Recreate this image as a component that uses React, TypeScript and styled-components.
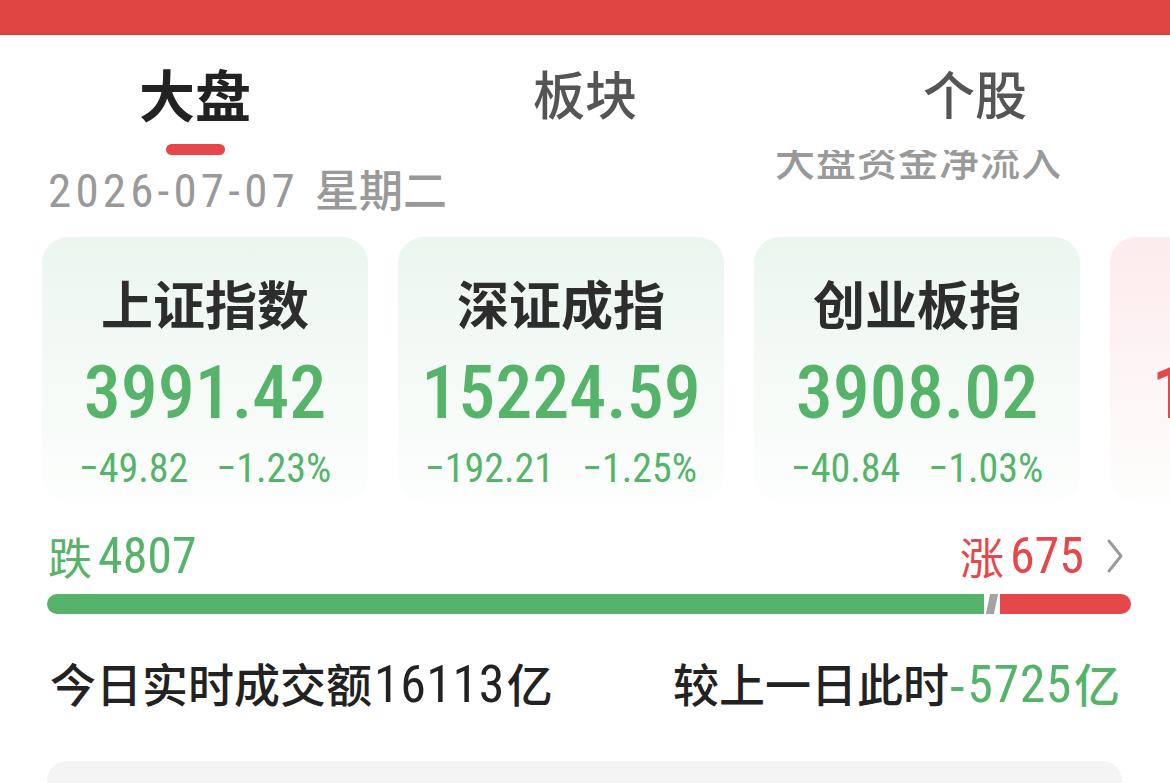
import React from "react";
import styled, { createGlobalStyle } from "styled-components";

const GlobalStyle = createGlobalStyle`
  html, body {
    margin: 0;
    padding: 0;
    background: #ffffff;
    font-family: "Noto Sans CJK SC", "Noto Sans", sans-serif;
  }
  * { box-sizing: border-box; }
`;

const NUM_FONT = `"Liberation Sans Narrow", "Roboto Condensed", "DejaVu Sans Condensed", Roboto, "Noto Sans CJK SC", sans-serif`;

const GREEN = "#55b46a";
const RED = "#e5474b";

interface IndexData {
  name: string;
  price: string;
  change: string;
  percent: string;
  up?: boolean;
}

const indices: IndexData[] = [
  { name: "上证指数", price: "3991.42", change: "−49.82", percent: "−1.23%" },
  { name: "深证成指", price: "15224.59", change: "−192.21", percent: "−1.25%" },
  { name: "创业板指", price: "3908.02", change: "−40.84", percent: "−1.03%" },
  { name: "北证50", price: "1388.56", change: "+5.1", percent: "+0.4%", up: true },
];

const Page = styled.div`
  width: 1170px;
  height: 783px;
  overflow: hidden;
  background: #fff;
`;

const TopBar = styled.div`
  height: 35px;
  background: #dc4540;
`;

const Header = styled.div`
  position: relative;
  z-index: 2;
  height: 115px;
  background: #fff;
  display: grid;
  grid-template-columns: repeat(3, 1fr);
`;

const Tab = styled.div<{ active?: boolean }>`
  display: flex;
  flex-direction: column;
  align-items: center;
  padding-top: ${({ active }) => (active ? "30px" : "32px")};
  font-size: ${({ active }) => (active ? "56px" : "52px")};
  line-height: 1;
  font-weight: ${({ active }) => (active ? 700 : 500)};
  color: ${({ active }) => (active ? "#222" : "#555")};
`;

const TabLine = styled.div`
  width: 59px;
  height: 11px;
  margin-top: 23px;
  border-radius: 6px;
  background: ${RED};
`;

const DateRow = styled.div`
  display: flex;
  justify-content: space-between;
  align-items: flex-start;
  margin-top: -11px;
  padding: 0 108px 0 48px;
`;

const DateText = styled.div`
  margin-top: 27px;
  font-size: 44px;
  line-height: 1;
  color: #999;
  font-weight: 500;
`;

const DateNum = styled.span`
  font-family: ${NUM_FONT};
  font-size: 47px;
  font-weight: 400;
  letter-spacing: 4.2px;
  margin-right: 16px;
`;

const Caption = styled.div`
  font-size: 40px;
  line-height: 1;
  color: #999;
  font-weight: 500;
  letter-spacing: 1px;
`;

const CardRow = styled.div`
  display: flex;
  gap: 30px;
  padding-left: 42px;
  margin-top: 23px;
  overflow: hidden;
`;

const Card = styled.div<{ up?: boolean }>`
  flex-shrink: 0;
  width: 326px;
  height: 266px;
  border-radius: 26px;
  background: linear-gradient(
    180deg,
    ${({ up }) => (up ? "#fdebed" : "#ebf6ef")} 0%,
    #fdfefd 100%
  );
  display: flex;
  flex-direction: column;
  align-items: center;
  padding-top: 40px;
`;

const CardTitle = styled.div`
  font-size: 52px;
  line-height: 1;
  font-weight: 700;
  color: #2d2d2d;
`;

const CardPrice = styled.div<{ up?: boolean }>`
  margin-top: 27px;
  font-family: ${NUM_FONT};
  font-size: 74px;
  line-height: 1;
  font-weight: 500;
  color: ${({ up }) => (up ? RED : GREEN)};
`;

const CardSub = styled.div<{ up?: boolean }>`
  display: flex;
  gap: 28px;
  margin-top: 19px;
  font-family: ${NUM_FONT};
  font-size: 40px;
  font-weight: 400;
  line-height: 1;
  color: ${({ up }) => (up ? RED : GREEN)};
`;

const BreadthRow = styled.div`
  display: flex;
  justify-content: space-between;
  align-items: center;
  padding: 0 46px 0 48px;
  margin-top: 28px;
`;

const Count = styled.div<{ up?: boolean }>`
  display: flex;
  align-items: center;
  font-size: 44px;
  line-height: 1;
  color: ${({ up }) => (up ? RED : GREEN)};
`;

const CountNum = styled.span`
  font-family: ${NUM_FONT};
  font-size: 50px;
  margin-left: 6px;
`;

const Chevron = styled.svg`
  margin-left: 22px;
`;

const Bar = styled.div`
  display: flex;
  align-items: stretch;
  height: 20px;
  margin: 13px 39px 0 47px;
`;

const Segment = styled.div<{ tone: "down" | "flat" | "up" }>`
  background: ${({ tone }) =>
    tone === "down" ? GREEN : tone === "up" ? RED : "#a3a3a3"};
  border-radius: ${({ tone }) =>
    tone === "down" ? "10px 0 0 10px" : tone === "up" ? "0 10px 10px 0" : "0"};
  transform: ${({ tone }) => (tone === "flat" ? "skewX(-12deg)" : "none")};
  margin-left: ${({ tone }) => (tone === "down" ? "0" : "4px")};
`;

const TurnoverRow = styled.div`
  display: flex;
  justify-content: space-between;
  align-items: center;
  padding: 0 50px;
  margin-top: 45px;
  font-size: 46px;
  line-height: 1;
  font-weight: 500;
  color: #222;
`;

const Num = styled.span<{ tone?: "down" }>`
  font-family: ${NUM_FONT};
  font-size: 52px;
  font-weight: 400;
  letter-spacing: 0.5px;
  margin: 0 2px;
  color: ${({ tone }) => (tone === "down" ? GREEN : "inherit")};
`;

const Green = styled.span`
  color: ${GREEN};
`;

const BottomPanel = styled.div`
  margin: 50px 48px 0 47px;
  height: 120px;
  border-radius: 20px;
  background: #f4f4f4;
`;

const IndexCard: React.FC<{ item: IndexData }> = ({ item }) => (
  <Card up={item.up}>
    <CardTitle>{item.name}</CardTitle>
    <CardPrice up={item.up}>{item.price}</CardPrice>
    <CardSub up={item.up}>
      <span>{item.change}</span>
      <span>{item.percent}</span>
    </CardSub>
  </Card>
);

const App: React.FC = () => {
  const down = 4807;
  const up = 675;

  return (
    <Page>
      <GlobalStyle />
      <TopBar />
      <Header>
        <Tab active>
          大盘
          <TabLine />
        </Tab>
        <Tab>板块</Tab>
        <Tab>个股</Tab>
      </Header>
      <DateRow>
        <DateText>
          <DateNum>2026-07-07</DateNum>星期二
        </DateText>
        <Caption>大盘资金净流入</Caption>
      </DateRow>
      <CardRow>
        {indices.map((item) => (
          <IndexCard key={item.name} item={item} />
        ))}
      </CardRow>
      <BreadthRow>
        <Count>
          跌<CountNum>{down}</CountNum>
        </Count>
        <Count up>
          涨<CountNum>{up}</CountNum>
          <Chevron width="18" height="36" viewBox="0 0 18 36">
            <path d="M3 3 L15 18 L3 33" fill="none" stroke="#9a9a9a" strokeWidth="3" strokeLinecap="round" strokeLinejoin="round" />
          </Chevron>
        </Count>
      </BreadthRow>
      <Bar>
        <Segment tone="down" style={{ flexGrow: down }} />
        <Segment tone="flat" style={{ width: 8, flexShrink: 0 }} />
        <Segment tone="up" style={{ flexGrow: up }} />
      </Bar>
      <TurnoverRow>
        <span>
          今日实时成交额<Num>16113</Num>亿
        </span>
        <span>
          较上一日此时<Green>-<Num tone="down">5725</Num>亿</Green>
        </span>
      </TurnoverRow>
      <BottomPanel />
    </Page>
  );
};

export default App;
